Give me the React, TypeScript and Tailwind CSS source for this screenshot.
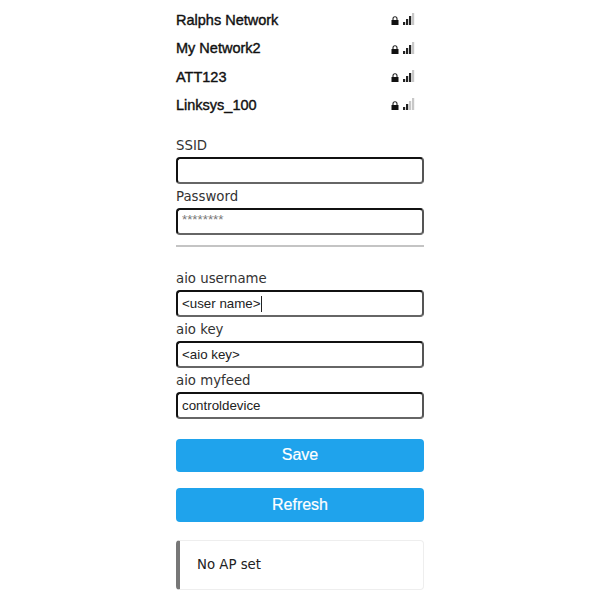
import React from 'react';

const networks = [
  { name: 'Ralphs Network', bars: 3 },
  { name: 'My Network2', bars: 3 },
  { name: 'ATT123', bars: 3 },
  { name: 'Linksys_100', bars: 2 },
];

function Lock() {
  return (
    <svg width="8" height="9" viewBox="0 0 8 9" className="block">
      <path d="M2 4V2.8a2 2 0 0 1 4 0V4" fill="none" stroke="#222" strokeWidth="1.1" />
      <rect x="0.5" y="4" width="7" height="5" fill="#111" />
    </svg>
  );
}

function Signal({ bars }: { bars: number }) {
  const heights = [3, 6, 9, 12];
  return (
    <svg width="12" height="12" viewBox="0 0 12 12" className="block">
      {heights.map((h, i) => (
        <rect
          key={i}
          x={i * 3}
          y={12 - h}
          width="2.2"
          height={h}
          fill={i < bars ? '#222' : '#c8c8c8'}
        />
      ))}
    </svg>
  );
}

function Field({ label, value, placeholder, caret }: { label: string; value?: string; placeholder?: string; caret?: boolean }) {
  return (
    <div className="flex flex-col">
      <label className="h-[24px] text-[13.3px] leading-[26px] text-[#333] font-['DejaVu_Sans',sans-serif]">{label}</label>
      <div className="relative">
        <input
          readOnly
          value={value ?? ''}
          placeholder={placeholder}
          className="block h-[27px] w-full rounded-[4px] border-2 border-[#111] border-b-[#666] border-r-[#555] bg-white pl-[4px] pr-[5px] text-[13.33px] text-[#222] outline-none placeholder:text-[#777] placeholder-shown:pb-[4px] font-['Liberation_Sans',sans-serif]"
        />
        {caret && <span className="absolute left-[85px] top-[6px] h-[16px] w-px bg-[#222]" />}
      </div>
    </div>
  );
}

export default function App() {
  return (
    <div className="min-h-[600px] bg-white">
      <div className="mx-auto w-[248px] pt-[6.5px]">
        <div className="flex flex-col">
          {networks.map((n) => (
            <div key={n.name} className="flex h-[28.4px] items-center justify-between">
              <span className="text-[14.5px] text-[#111] font-['Liberation_Sans',sans-serif] [-webkit-text-stroke:0.4px_#111]">{n.name}</span>
              <div className="mr-[9px] flex items-end gap-[4px] pb-[3px]">
                <Lock />
                <Signal bars={n.bars} />
              </div>
            </div>
          ))}
        </div>

        <div className="mt-[12.9px] flex flex-col">
          <Field label="SSID" />
          <Field label="Password" placeholder="********" />
        </div>
        <hr className="mt-[10px] mb-[19px] border-t-2 border-[#c4c4c4]" />

        <div className="flex flex-col">
          <Field label="aio username" value="<user name>" caret />
          <Field label="aio key" value="<aio key>" />
          <Field label="aio myfeed" value="controldevice" />
        </div>

        <button className="mt-[20px] block h-[33px] w-full rounded-[4px] bg-[#1fa3ec] text-[16px] text-white font-['Liberation_Sans',sans-serif] [-webkit-text-stroke:0.2px_#fff]">Save</button>
        <button className="mt-[16px] block h-[34px] w-full rounded-[4px] bg-[#1fa3ec] text-[16px] text-white font-['Liberation_Sans',sans-serif] [-webkit-text-stroke:0.2px_#fff]">Refresh</button>

        <div className="mt-[18px] flex h-[50px] items-center rounded-[4px] border border-[#eeeeee] border-l-[4px] border-l-[#777] pl-[17px] pt-[1px] text-[13.3px] text-[#222] font-['DejaVu_Sans',sans-serif]">
          No AP set
        </div>
      </div>
    </div>
  );
}
